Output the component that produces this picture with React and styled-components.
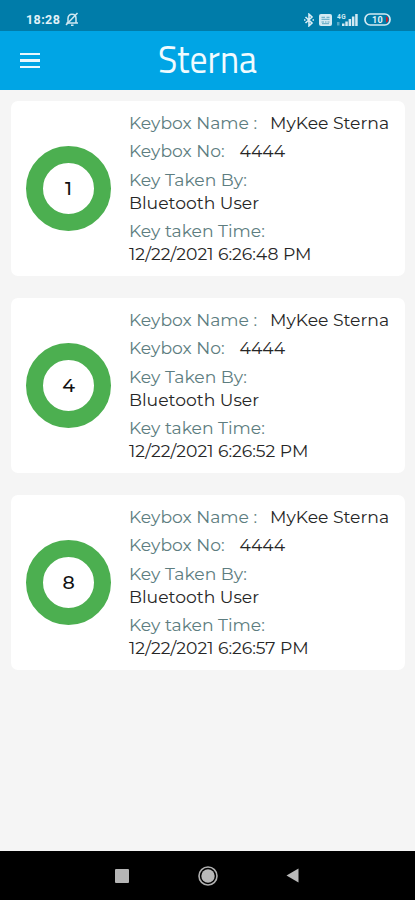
import React from 'react'
import styled, { createGlobalStyle } from 'styled-components'

const keys = [
    { slot: "1", name: "MyKee Sterna", no: "4444", user: "Bluetooth User", time: "12/22/2021 6:26:48 PM" },
    { slot: "4", name: "MyKee Sterna", no: "4444", user: "Bluetooth User", time: "12/22/2021 6:26:52 PM" },
    { slot: "8", name: "MyKee Sterna", no: "4444", user: "Bluetooth User", time: "12/22/2021 6:26:57 PM" },
]

function BellOff() {
    return (
        <svg width="14" height="15" viewBox="0 0 14 15" fill="none" stroke="#cfe8f2" strokeWidth="1.5">
            <path d="M1.500 11h11.500M3 11V6.500C3 4 4.500 2.300 7 2.300s4 1.700 4 4.200V11M6 13.200h2.500" />
            <path d="M12.500 1L1 13" />
        </svg>
    )
}

function Bluetooth() {
    return (
        <svg width="10" height="14" viewBox="0 0 10 14" fill="none" stroke="#d9edf5" strokeWidth="1.6">
            <path d="M1.500 4L8 10 5 12.800V1.200L8 4 1.500 10" />
            <path d="M0 7h1.500M8.500 7H10" />
        </svg>
    )
}

function Volte() {
    return (
        <svg width="13" height="12" viewBox="0 0 13 12">
            <rect width="13" height="12" rx="2" fill="#d3eaf3" />
            <path d="M2.500 3.300h3.500M7.500 3.300h3M2.500 5.300h8M2.500 8h2.500M6 8h1.500M8.500 8h2M3 9.700h7" stroke="#5ba5c1" strokeWidth="1" />
        </svg>
    )
}

function Signal() {
    return (
        <svg width="22" height="14" viewBox="0 0 22 14" fill="#d3eaf3">
            <text x="0" y="5.500" fontSize="6.500" fontWeight="700" fontFamily="Roboto, sans-serif">4G</text>
            <path d="M0 9h2.500v3.500H0z" opacity=".4" />
            <path d="M5 10.500h2.500V13H5zM8.300 8.500h2.500V13H8.300zM11.600 6h2.500v7h-2.500zM14.900 3.500h2.500V13h-2.500zM18.200 1h2.500v12h-2.500z" />
        </svg>
    )
}

function Battery() {
    return (
        <svg width="27" height="13" viewBox="0 0 27 13">
            <rect x="1" y="1" width="25" height="11" rx="5.200" fill="none" stroke="#d3eaf3" strokeWidth="1.700" />
            <path d="M22 3.200c3 .8 3 5.800 0 6.600z" fill="#c3202f" />
            <text x="13.500" y="9.700" textAnchor="middle" fontSize="9" fontWeight="700" fill="#e4f3f8" fontFamily="Roboto, sans-serif">10</text>
        </svg>
    )
}

export default function App() {
    return (
        <Screen>
            <GlobalStyle />
            <StatusBar>
                <div className="left">
                    <span>18:28</span>
                    <BellOff />
                </div>
                <div className="right">
                    <Bluetooth />
                    <Volte />
                    <Signal />
                    <Battery />
                </div>
            </StatusBar>
            <Header>
                <MenuButton aria-label="Menu">
                    <i /><i /><i />
                </MenuButton>
                <Logo width="102" height="59" viewBox="0 0 102 59">
                    <text x="0" y="42" textLength="99" lengthAdjust="spacingAndGlyphs">Sterna</text>
                </Logo>
            </Header>
            <List>
                {keys.map((key) => (
                    <Card key={key.slot}>
                        <Ring>{key.slot}</Ring>
                        <Details>
                            <Row>
                                <Label>Keybox Name :</Label>
                                <Value $indent={13}>{key.name}</Value>
                            </Row>
                            <Row>
                                <Label>Keybox No:</Label>
                                <Value $indent={15}>{key.no}</Value>
                            </Row>
                            <Row $stacked>
                                <Label>Key Taken By:</Label>
                                <Value>{key.user}</Value>
                            </Row>
                            <Row $stacked>
                                <Label>Key taken Time:</Label>
                                <Value>{key.time}</Value>
                            </Row>
                        </Details>
                    </Card>
                ))}
            </List>
            <NavBar>
                <svg width="14" height="14" viewBox="0 0 14 14">
                    <rect width="14" height="14" rx="1" fill="#b5b5b5" />
                </svg>
                <svg width="20" height="20" viewBox="0 0 20 20">
                    <circle cx="10" cy="10" r="9" fill="none" stroke="#b0b0b0" strokeWidth="1.600" />
                    <circle cx="10" cy="10" r="6.700" fill="#b9b9b9" />
                </svg>
                <svg width="13" height="15" viewBox="0 0 13 15">
                    <path d="M12.500.5v14L.5 7.500z" fill="#b9b9b9" />
                </svg>
            </NavBar>
        </Screen>
    )
}

const GlobalStyle = createGlobalStyle`
  *{
    box-sizing:border-box;
  }
  body{
    margin:0;
    background:#f5f5f5;
  }
`;

const Screen = styled.div`
  display:flex;
  flex-direction:column;
  width:415px;
  height:900px;
  background:#f5f5f5;
  font-family:Montserrat, Inter, sans-serif;
`;

const StatusBar = styled.div`
  display:flex;
  justify-content:space-between;
  height:31px;
  padding:8px 24px 0 26px;
  background:#007ca9;
  color:#e2f2f8;
  font:700 12.5px/24px Roboto, sans-serif;
  letter-spacing:0.4px;
  .left, .right{
    display:flex;
    align-items:center;
    gap:5px;
    height:23px;
  }
`;

const Header = styled.header`
  display:flex;
  align-items:center;
  height:59px;
  padding-left:20px;
  background:#00a5e5;
`;

const MenuButton = styled.button`
  display:flex;
  flex-direction:column;
  gap:4px;
  width:20px;
  padding:0;
  border:none;
  background:none;
  i{
    height:2.5px;
    background:#e9f8fe;
  }
`;

const Logo = styled.svg`
  margin-left:118px;
  overflow:visible;
  fill:#f0fbff;
  font-family:"Titillium Web", "Open Sans", sans-serif;
  font-size:38px;
`;

const List = styled.main`
  display:flex;
  flex:1;
  flex-direction:column;
  gap:22px;
  padding:11px 10px 0 11px;
`;

const Card = styled.section`
  display:flex;
  align-items:center;
  height:175px;
  padding-left:15px;
  border-radius:7px;
  background:#fff;
`;

const Ring = styled.div`
  display:flex;
  align-items:center;
  justify-content:center;
  width:85px;
  height:85px;
  border:17px solid #4caf50;
  border-radius:50%;
  color:#111;
  font-size:19px;
  font-weight:500;
`;

const Details = styled.div`
  display:flex;
  flex-direction:column;
  gap:5.6px;
  margin-left:18px;
  padding-bottom:1px;
`;

const Row = styled.div`
  display:flex;
  flex-direction:${(props) => (props.$stacked ? "column" : "row")};
  font-size:17.2px;
  line-height:23px;
  white-space:nowrap;
`;

const Label = styled.span`
  color:#5d7d80;
`;

const Value = styled.span`
  margin-left:${(props) => props.$indent || 0}px;
  color:#262626;
`;

const NavBar = styled.footer`
  display:flex;
  align-items:center;
  height:49px;
  padding-left:115px;
  background:#000;
  svg:nth-child(2){
    margin-left:69px;
  }
  svg:nth-child(3){
    margin-left:68px;
  }
`;
